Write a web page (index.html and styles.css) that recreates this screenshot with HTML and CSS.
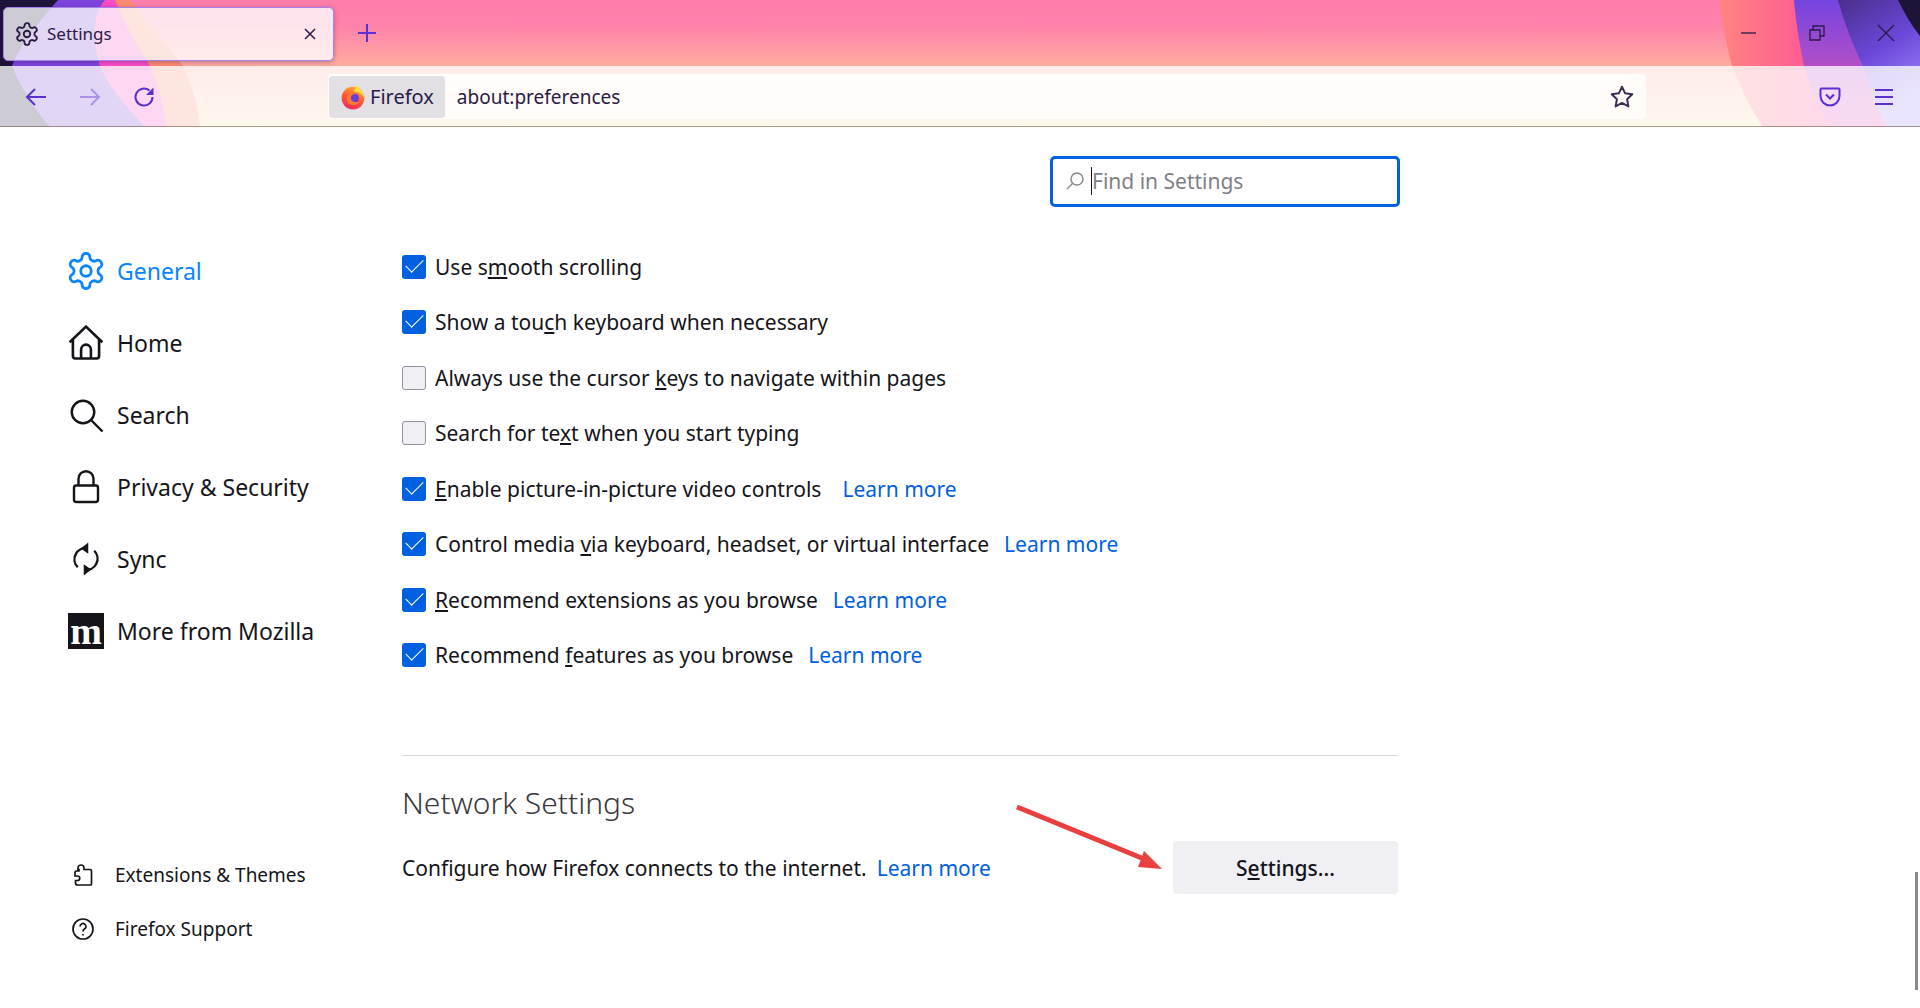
FILE: index.html
```html
<!DOCTYPE html>
<html lang="en">
<head>
  <meta charset="UTF-8">
  <title>Settings</title>
  <link rel="stylesheet" href="styles.css">
</head>
<body>
  <svg width="0" height="0" class="defs">
    <symbol id="gear" viewBox="0 0 24 24">
      <path d="M12.22 2h-.44a2 2 0 0 0-2 2v.18a2 2 0 0 1-1 1.73l-.43.25a2 2 0 0 1-2 0l-.15-.08a2 2 0 0 0-2.73.73l-.22.38a2 2 0 0 0 .73 2.73l.15.1a2 2 0 0 1 1 1.72v.51a2 2 0 0 1-1 1.74l-.15.09a2 2 0 0 0-.73 2.73l.22.38a2 2 0 0 0 2.73.73l.15-.08a2 2 0 0 1 2 0l.43.25a2 2 0 0 1 1 1.73V20a2 2 0 0 0 2 2h.44a2 2 0 0 0 2-2v-.18a2 2 0 0 1 1-1.73l.43-.25a2 2 0 0 1 2 0l.15.08a2 2 0 0 0 2.73-.73l.22-.39a2 2 0 0 0-.73-2.73l-.15-.08a2 2 0 0 1-1-1.74v-.5a2 2 0 0 1 1-1.74l.15-.09a2 2 0 0 0 .73-2.73l-.22-.38a2 2 0 0 0-2.73-.73l-.15.08a2 2 0 0 1-2 0l-.43-.25a2 2 0 0 1-1-1.73V4a2 2 0 0 0-2-2z"/>
      <circle cx="12" cy="12" r="3"/>
    </symbol>
  </svg>

  <header class="chrome">
    <!-- colorway artwork behind the tabs and toolbar -->
    <svg class="art" width="1920" height="127" viewBox="0 0 1920 127">
      <defs>
        <linearGradient id="sky" x1="0" y1="0" x2="0" y2="1">
          <stop offset="0" stop-color="#ff7dab"/>
          <stop offset="0.2" stop-color="#ff82aa"/>
          <stop offset="0.5" stop-color="#ffa9a0"/>
          <stop offset="1" stop-color="#ffd8a8"/>
        </linearGradient>
        <linearGradient id="hot" x1="0" y1="0" x2="1" y2="0">
          <stop offset="0" stop-color="#ff8480"/>
          <stop offset="0.6" stop-color="#ff4c9c"/>
          <stop offset="1" stop-color="#ff4c9c"/>
        </linearGradient>
        <linearGradient id="violet" x1="0" y1="0" x2="0" y2="1">
          <stop offset="0" stop-color="#7444e0"/>
          <stop offset="0.5" stop-color="#b04ec8"/>
          <stop offset="1" stop-color="#e85cc0"/>
        </linearGradient>
        <linearGradient id="dusk" x1="0" y1="0" x2="0.4" y2="1">
          <stop offset="0" stop-color="#4a2e8c"/>
          <stop offset="0.5" stop-color="#6a48d8"/>
          <stop offset="1" stop-color="#a088ff"/>
        </linearGradient>
      </defs>
      <rect width="1920" height="127" fill="url(#sky)"/>
      <path d="M130 0C150 25 170 50 183 66C192 85 198 105 200 127H0V0Z" fill="#ff8a70"/>
      <path d="M115 0C125 25 140 50 150 66C160 90 165 110 166 127H0V0Z" fill="#f84cc4"/>
      <path d="M105 0C90 15 95 50 100 66C110 90 130 110 145 127H0V0Z" fill="#7d44dc"/>
      <path d="M58 0C40 20 20 45 12 66C22 90 35 110 50 127H0V0Z" fill="#1e1438"/>
      <path d="M1719 0C1722 25 1727 45 1732 66C1741 90 1752 110 1763 127H1920V0Z" fill="url(#hot)"/>
      <path d="M1794 0C1796 25 1800 45 1804 66C1811 90 1820 110 1830 127H1920V0Z" fill="url(#violet)"/>
      <path d="M1838 0C1845 25 1853 45 1863 66C1870 90 1878 110 1887 127H1920V0Z" fill="url(#dusk)"/>
      <path d="M1898 0C1904 12 1911 25 1920 36V0Z" fill="#1e1438"/>
    </svg>

    <div class="tabstrip">
      <div class="tab">
        <svg class="tab-icon" width="26" height="26"><use href="#gear"/></svg>
        <span class="tab-title">Settings</span>
        <svg class="tab-close" width="14" height="14" viewBox="0 0 14 14"><path d="M2 2l10 10M12 2L2 12"/></svg>
      </div>
      <svg class="new-tab" width="20" height="20" viewBox="0 0 20 20"><path d="M10 1v18M1 10h18"/></svg>
      <div class="window-controls">
        <svg width="16" height="16" viewBox="0 0 16 16"><path d="M0 8h15"/></svg>
        <svg width="16" height="16" viewBox="0 0 16 16"><path d="M1 5h10v10H1zM4 5V1h11v10h-4"/></svg>
        <svg width="18" height="18" viewBox="0 0 18 18"><path d="M1 1l16 16M17 1L1 17"/></svg>
      </div>
    </div>

    <div class="toolbar">
      <svg class="nav-btn" width="24" height="24" viewBox="0 0 24 24"><path d="M22 12H3M11 4l-8 8 8 8"/></svg>
      <svg class="nav-btn off" width="24" height="24" viewBox="0 0 24 24"><path d="M2 12h19M13 4l8 8-8 8"/></svg>
      <svg class="nav-btn" width="24" height="24" viewBox="0 0 24 24"><path d="M20.500 12a8.500 8.500 0 1 1-3-6.500"/><path class="solid-nav" d="M21.500 2.500V10H14z"/></svg>
      <div class="urlbar">
        <div class="identity">
          <svg width="26" height="26" viewBox="0 0 24 24">
            <defs>
              <linearGradient id="fox" x1="0.7" y1="0" x2="0.3" y2="1">
                <stop offset="0" stop-color="#ffb52e"/>
                <stop offset="0.5" stop-color="#ff5a2c"/>
                <stop offset="1" stop-color="#f2286a"/>
              </linearGradient>
            </defs>
            <circle cx="12" cy="13" r="10.500" fill="url(#fox)"/>
            <path d="M15 1c3 3 7 6 7 11-3-4-7-5-10-5 2-1 3-3 3-6z" fill="#ffdc3e"/>
            <circle cx="12.500" cy="13" r="5" fill="#6b3fd4"/>
            <path d="M7 11c2-3 7-4 9-2-3 0-6 1-6 4 0 3 4 5 8 3-2 4-7 4-10 2-2-2-2-5-1-7z" fill="#ff7a2e"/>
          </svg>
          <span>Firefox</span>
        </div>
        <span class="url-text">about:preferences</span>
        <svg class="star" width="26" height="26" viewBox="0 0 24 24"><path d="M12 2.500l2.900 6.100 6.600.9-4.800 4.600 1.200 6.600L12 17.500l-5.900 3.200 1.200-6.600-4.800-4.600 6.600-.9z"/></svg>
      </div>
      <div class="toolbar-right">
        <svg class="nav-btn" width="24" height="24" viewBox="0 0 24 24"><path d="M3.500 3.500h17a1 1 0 0 1 1 1V11a9.500 9.500 0 0 1-19 0V4.500a1 1 0 0 1 1-1zM8 9.500l4 4 4-4"/></svg>
        <svg class="nav-btn" width="24" height="24" viewBox="0 0 24 24"><path d="M3 5h18M3 12h18M3 19h18"/></svg>
      </div>
    </div>
  </header>

  <div class="page">
    <nav class="sidebar">
      <ul class="categories">
        <li class="cat active"><svg class="cat-icon" width="42" height="42"><use href="#gear"/></svg>General</li>
        <li class="cat"><svg class="cat-icon" width="36" height="36" viewBox="1 1 22 22"><path d="M2 11.500L12 2l10 9.500M4 10v10a1.500 1.500 0 0 0 1.500 1.500h13A1.500 1.500 0 0 0 20 20V10M9 21.500V16a3 3 0 0 1 6 0v5.500"/></svg>Home</li>
        <li class="cat"><svg class="cat-icon" width="36" height="36" viewBox="0 0 24 24"><circle cx="10" cy="10" r="7.500"/><path d="M15.500 15.500L23 23"/></svg>Search</li>
        <li class="cat"><svg class="cat-icon" width="36" height="36" viewBox="0 0 24 24"><path d="M5.500 11h13A1.500 1.500 0 0 1 20 12.500v8a1.500 1.500 0 0 1-1.500 1.500h-13A1.500 1.500 0 0 1 4 20.500v-8A1.500 1.500 0 0 1 5.500 11zM7 11V6.500a5 5 0 0 1 10 0V11"/></svg>Privacy &amp; Security</li>
        <li class="cat"><svg class="cat-icon" width="36" height="36" viewBox="0 0 24 24"><path d="M13 4.800A7.500 7.500 0 0 0 6.500 17.500M11 19.200A7.500 7.500 0 0 0 17.500 6.500"/><path class="solid" d="M13.500 1v7.500L8.500 5zM10.500 23v-7.500l5 3.500z"/></svg>Sync</li>
        <li class="cat"><span class="moz-logo">m</span>More from Mozilla</li>
      </ul>
      <ul class="support">
        <li class="sup"><svg class="sup-icon" width="24" height="24" viewBox="0 0 24 24"><path d="M10 2a3 3 0 0 1 3 3v1.500h6a1.500 1.500 0 0 1 1.500 1.500v13a1 1 0 0 1-1 1h-13a2 2 0 0 1-2-2v-2.500h2a2.200 2.200 0 0 0 0-4.500h-2.500V9.500a1.500 1.500 0 0 1 1.500-1.500H8V6.500H7V5a3 3 0 0 1 3-3z"/></svg>Extensions &amp; Themes</li>
        <li class="sup"><svg class="sup-icon" width="24" height="24" viewBox="0 0 24 24"><circle cx="12" cy="12" r="10"/><path d="M9 9.500a3 3 0 1 1 4.500 2.600c-1 .6-1.500 1.100-1.500 2.400M12 17v1.500"/></svg>Firefox Support</li>
      </ul>
    </nav>

    <main class="content">
      <div class="search-wrap">
        <div class="search-box">
          <svg class="search-icon" width="20" height="20" viewBox="0 0 20 20"><circle cx="12" cy="8" r="6"/><path d="M7.500 12.500L2 18"/></svg>
          <span class="caret"></span>
          <span class="placeholder">Find in Settings</span>
        </div>
      </div>

      <ul class="options">
        <li class="option"><span class="check on"></span><span>Use s<u>m</u>ooth scrolling</span></li>
        <li class="option"><span class="check on"></span><span>Show a tou<u>c</u>h keyboard when necessary</span></li>
        <li class="option"><span class="check"></span><span>Always use the cursor <u>k</u>eys to navigate within pages</span></li>
        <li class="option"><span class="check"></span><span>Search for te<u>x</u>t when you start typing</span></li>
        <li class="option"><span class="check on"></span><span><u>E</u>nable picture-in-picture video controls</span><a class="learn wide">Learn more</a></li>
        <li class="option"><span class="check on"></span><span>Control media <u>v</u>ia keyboard, headset, or virtual interface</span><a class="learn">Learn more</a></li>
        <li class="option"><span class="check on"></span><span><u>R</u>ecommend extensions as you browse</span><a class="learn">Learn more</a></li>
        <li class="option"><span class="check on"></span><span>Recommend <u>f</u>eatures as you browse</span><a class="learn">Learn more</a></li>
      </ul>

      <hr class="divider">

      <h2 class="section-title">Network Settings</h2>
      <div class="network-row">
        <p>Configure how Firefox connects to the internet.<a class="learn near">Learn more</a></p>
        <button class="settings-btn">S<u>e</u>ttings...</button>
      </div>
    </main>

    <!-- red annotation arrow drawn over the page -->
    <svg class="arrow" width="160" height="70" viewBox="0 0 160 70">
      <path d="M2 2L134 56" stroke="#e8403f" stroke-width="5" fill="none"/>
      <path d="M147 64L123 62L129 46Z" fill="#e8403f"/>
    </svg>
    <div class="scroll-thumb"></div>
  </div>
</body>
</html>
```

FILE: styles.css
```css
/* Page layout */
html, body {
  margin: 0;
  height: 100%;
  overflow: hidden;
}

body {
  display: flex;
  flex-direction: column;
  font-family: "Noto Sans", "Open Sans", sans-serif;
  color: #15141a;
  background-color: #fff;
}

ul {
  list-style: none;
  margin: 0;
  padding: 0;
}

.defs {
  position: absolute;
}

/* Browser chrome */
.chrome {
  position: relative;
  height: 127px;
  flex: none;
  overflow: hidden;
}

.chrome::after {
  content: "";
  position: absolute;
  left: 0;
  right: 0;
  bottom: 0;
  height: 1px;
  background-color: rgba(110, 60, 40, 0.5);
}

.art {
  position: absolute;
  top: 0;
  left: 0;
}

.tabstrip {
  position: relative;
  height: 66px;
  display: flex;
  align-items: center;
  box-sizing: border-box;
  padding-left: 3px;
}

.tab {
  width: 331px;
  height: 54px;
  margin-top: 1px;
  box-sizing: border-box;
  display: flex;
  align-items: center;
  padding: 0 16px 0 10px;
  border: 1.5px solid #a781ee;
  border-radius: 5px;
  background-color: rgba(255, 255, 255, 0.78);
  box-shadow: 0 1px 5px rgba(60, 20, 90, 0.35);
}

.tab-icon {
  fill: none;
  stroke: #2b1a45;
  stroke-width: 1.7;
}

.tab-title {
  margin-left: 7px;
  font-size: 17px;
  color: #2b1a45;
  flex: 1;
}

.tab-close {
  stroke: #2b1a45;
  stroke-width: 1.5;
  fill: none;
}

.new-tab {
  margin-left: 23px;
  stroke: #5b2fd0;
  stroke-width: 2;
  fill: none;
}

.window-controls {
  margin-left: auto;
  display: flex;
  align-items: center;
  gap: 52px;
  padding-right: 25px;
}

.window-controls svg {
  stroke: #2b1a45;
  stroke-width: 1.3;
  fill: none;
}

.toolbar {
  position: relative;
  height: 61px;
  display: flex;
  align-items: center;
  padding-left: 24px;
  background-color: rgba(255, 255, 255, 0.78);
}

.nav-btn {
  margin-right: 30px;
  stroke: #5b2fd0;
  stroke-width: 2;
  fill: none;
  flex: none;
}

.nav-btn.off {
  opacity: 0.4;
}

.solid-nav {
  fill: #5b2fd0;
  stroke: none;
}

.urlbar {
  margin-left: 142px;
  width: 1318px;
  height: 45px;
  box-sizing: border-box;
  padding: 1px;
  display: flex;
  align-items: center;
  border-radius: 4px;
  background-color: #fffcf9;
}

.identity {
  height: 42px;
  display: flex;
  align-items: center;
  gap: 4px;
  padding: 0 11px;
  border-radius: 4px;
  background-color: #e2dfe5;
  font-size: 20px;
  color: #2b1a45;
}

.url-text {
  margin-left: 12px;
  font-size: 19px;
  color: #2b1a45;
  flex: 1;
}

.star {
  margin-right: 10px;
  stroke: #3a2c55;
  stroke-width: 1.8;
  stroke-linejoin: round;
  fill: none;
}

.toolbar-right {
  margin-left: auto;
  display: flex;
}

.toolbar-right .nav-btn:last-child {
  margin-right: 24px;
}

/* Settings page */
.page {
  position: relative;
  flex: 1;
  display: flex;
}

.sidebar {
  width: 402px;
  box-sizing: border-box;
  padding: 108px 0 52px 68px;
  display: flex;
  flex-direction: column;
  justify-content: space-between;
  flex: none;
}

.cat {
  height: 72px;
  display: flex;
  align-items: center;
  font-size: 23px;
}

.cat-icon {
  margin-right: 13px;
  fill: none;
  stroke: #15141a;
  stroke-width: 1.6;
  flex: none;
}

.cat.active {
  color: #0a84ff;
}

.cat.active .cat-icon {
  margin: 0 10px 0 -3px;
  stroke: #0a84ff;
}

.solid {
  fill: #15141a;
  stroke: none;
}

.moz-logo {
  width: 36px;
  height: 36px;
  margin-right: 13px;
  display: flex;
  align-items: center;
  justify-content: center;
  background-color: #15141a;
  color: #fff;
  font-family: "Liberation Serif", serif;
  font-weight: bold;
  font-size: 38px;
  line-height: 32px;
  flex: none;
}

.sup {
  height: 54px;
  display: flex;
  align-items: center;
  font-size: 19px;
  padding-left: 3px;
}

.sup-icon {
  margin-right: 20px;
  fill: none;
  stroke: #15141a;
  stroke-width: 1.7;
}

.content {
  width: 996px;
}

.search-wrap {
  display: flex;
  justify-content: flex-end;
  padding-top: 29px;
}

.search-box {
  width: 350px;
  height: 51px;
  box-sizing: border-box;
  border: 3px solid #0060df;
  border-radius: 5px;
  display: flex;
  align-items: center;
  padding: 0 0 2px 12px;
  margin-right: -2px;
}

.search-icon {
  stroke: #8a8a8a;
  stroke-width: 1.5;
  fill: none;
  flex: none;
}

.caret {
  width: 1px;
  height: 28px;
  margin-left: 6px;
  background-color: #15141a;
}

.placeholder {
  font-size: 21px;
  color: #7f7f88;
}

.options {
  margin-top: 32px;
}

.option {
  height: 55.500px;
  display: flex;
  align-items: center;
  font-size: 21px;
}

.check {
  width: 24px;
  height: 24px;
  box-sizing: border-box;
  margin-right: 9px;
  border: 1px solid #8f8f9d;
  border-radius: 3px;
  background-color: #f0f0f4;
  flex: none;
}

.check.on {
  border: none;
  background-color: #0060df;
  position: relative;
}

.check.on::after {
  content: "";
  position: absolute;
  left: 4px;
  top: 4px;
  width: 17px;
  height: 9px;
  box-sizing: border-box;
  border-left: 1.5px solid #fff;
  border-bottom: 1.5px solid #fff;
  transform: rotate(-45deg);
}

.learn {
  margin-left: 15px;
  color: #0060df;
}

.learn.wide {
  margin-left: 21px;
}

.learn.near {
  margin-left: 10px;
}

.divider {
  margin: 72px 0 0;
  border: none;
  border-top: 1px solid #d7d7db;
}

.section-title {
  margin: 25px 0 0;
  font-size: 30px;
  font-weight: 300;
  line-height: 44px;
  color: #3a3940;
}

.network-row {
  display: flex;
  align-items: center;
  justify-content: space-between;
  margin-top: 16px;
  font-size: 21px;
}

.network-row p {
  margin: 0;
}

.settings-btn {
  width: 225px;
  height: 53px;
  border: none;
  border-radius: 4px;
  background-color: #f0f0f4;
  color: #15141a;
  font-family: inherit;
  font-size: 21px;
  font-weight: 500;
}

.arrow {
  position: absolute;
  left: 1015px;
  top: 678px;
}

.scroll-thumb {
  position: absolute;
  right: 2px;
  top: 745px;
  width: 3px;
  height: 118px;
  background-color: #8a8a8a;
}
```
